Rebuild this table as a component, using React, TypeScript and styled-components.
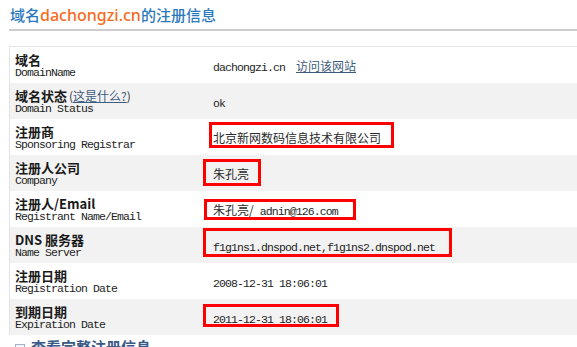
import React from 'react';
import styled, { createGlobalStyle } from 'styled-components';

const GlobalStyle = createGlobalStyle`
    html, body {
        margin: 0;
        padding: 0;
        background: #fff;
        overflow: hidden;
    }
    body {
        font-family: 'Noto Sans CJK SC', sans-serif;
        color: #333;
    }
`;

const Page = styled.div`
    width: 577px;
    padding: 6px 0 0 9px;
    box-sizing: border-box;
`;

const Title = styled.h2`
    margin: 0;
    padding-left: 1px;
    height: 23px;
    font-size: 15px;
    line-height: 18px;
    font-weight: 500;
    color: #2a79bd;
    border-bottom: 2px solid #cdcdcd;
`;

const Domain = styled.span`
    font-family: 'Noto Sans', sans-serif;
    font-size: 16px;
    font-weight: 500;
    color: #f76b1c;
`;

const Table = styled.div`
    margin-top: 15px;
    border-top: 1px solid #e3e3e3;
    border-left: 1px solid #e3e3e3;
`;

const Row = styled.div<{ $shaded?: boolean }>`
    position: relative;
    display: flex;
    align-items: center;
    height: 36px;
    background: ${(p) => (p.$shaded ? '#f2f2f2' : '#fff')};
`;

const Label = styled.div`
    width: 185px;
    padding-left: 5px;
    flex-shrink: 0;
`;

const LabelCn = styled.div`
    height: 15px;
    font-size: 13px;
    line-height: 15px;
    font-weight: bold;
    color: #1a1a1a;
    white-space: nowrap;
`;

const LabelEn = styled.div`
    height: 12px;
    font-family: 'Liberation Mono', monospace;
    font-size: 11.5px;
    letter-spacing: -0.9px;
    line-height: 12px;
    color: #1e1e1e;
`;

const Hint = styled.span`
    font-size: 12px;
    font-weight: normal;
    color: #333;
    margin-left: 2px;
`;

const Link = styled.a`
    color: #3d5b7c;
    text-decoration: underline;
    font-size: 12px;
    font-weight: normal;
`;

const Value = styled.div`
    padding-left: 13px;
    font-size: 12px;
    color: #2a2a2a;
    white-space: nowrap;
`;

const Mono = styled.span`
    font-family: 'Liberation Mono', monospace;
    font-size: 11.5px;
    letter-spacing: -0.9px;
    color: #1e1e1e;
`;

const SiteLink = styled(Link)`
    margin-left: 11px;
`;

const Mark = styled.span<{ $x: number; $y: number; $w: number; $h: number }>`
    position: absolute;
    left: ${(p) => p.$x}px;
    top: ${(p) => p.$y}px;
    width: ${(p) => p.$w}px;
    height: ${(p) => p.$h}px;
    border: 3px solid #f00;
    box-sizing: border-box;
    pointer-events: none;
`;

const More = styled.div`
    display: flex;
    align-items: center;
    gap: 6px;
    padding: 3px 0 0 6px;
    font-size: 15px;
    line-height: 18px;
    font-weight: bold;
    color: #3a5a86;
`;

const Box = styled.span`
    width: 8px;
    height: 8px;
    margin-top: 4px;
    border: 1px solid #9fb3cc;
    background: #f4f7fb;
`;

type Mk = { x: number; y: number; w: number; h: number };

type Item = {
    cn: React.ReactNode;
    en: string;
    value: React.ReactNode;
    mark?: Mk;
};

const items: Item[] = [
    {
        cn: '域名',
        en: 'DomainName',
        value: (
            <>
                <Mono>dachongzi.cn</Mono>
                <SiteLink href="#">访问该网站</SiteLink>
            </>
        ),
    },
    {
        cn: (
            <>
                域名状态
                <Hint>
                    (<Link href="#">这是什么?</Link>)
                </Hint>
            </>
        ),
        en: 'Domain Status',
        value: <Mono>ok</Mono>,
    },
    {
        cn: '注册商',
        en: 'Sponsoring Registrar',
        value: '北京新网数码信息技术有限公司',
        mark: { x: 199, y: 3, w: 185, h: 26 },
    },
    {
        cn: '注册人公司',
        en: 'Company',
        value: '朱孔亮',
        mark: { x: 193, y: 4, w: 58, h: 27 },
    },
    {
        cn: '注册人/Email',
        en: 'Registrant Name/Email',
        value: (
            <>
                朱孔亮/<Mono> adnin@126.com</Mono>
            </>
        ),
        mark: { x: 194, y: 8, w: 152, h: 21 },
    },
    {
        cn: 'DNS 服务器',
        en: 'Name Server',
        value: <Mono>f1g1ns1.dnspod.net,f1g1ns2.dnspod.net</Mono>,
        mark: { x: 193, y: 1, w: 249, h: 29 },
    },
    {
        cn: '注册日期',
        en: 'Registration Date',
        value: <Mono>2008-12-31 18:06:01</Mono>,
    },
    {
        cn: '到期日期',
        en: 'Expiration Date',
        value: <Mono>2011-12-31 18:06:01</Mono>,
        mark: { x: 193, y: 5, w: 136, h: 23 },
    },
];

export default function App() {
    return (
        <Page>
            <GlobalStyle />
            <Title>
                域名<Domain>dachongzi.cn</Domain>的注册信息
            </Title>
            <Table>
                {items.map((it, i) => (
                    <Row key={i} $shaded={i % 2 === 1}>
                        <Label>
                            <LabelCn>{it.cn}</LabelCn>
                            <LabelEn>{it.en}</LabelEn>
                        </Label>
                        <Value>{it.value}</Value>
                        {it.mark && (
                            <Mark
                                $x={it.mark.x}
                                $y={it.mark.y}
                                $w={it.mark.w}
                                $h={it.mark.h}
                            />
                        )}
                    </Row>
                ))}
            </Table>
            <More>
                <Box />
                查看完整注册信息
            </More>
        </Page>
    );
}
